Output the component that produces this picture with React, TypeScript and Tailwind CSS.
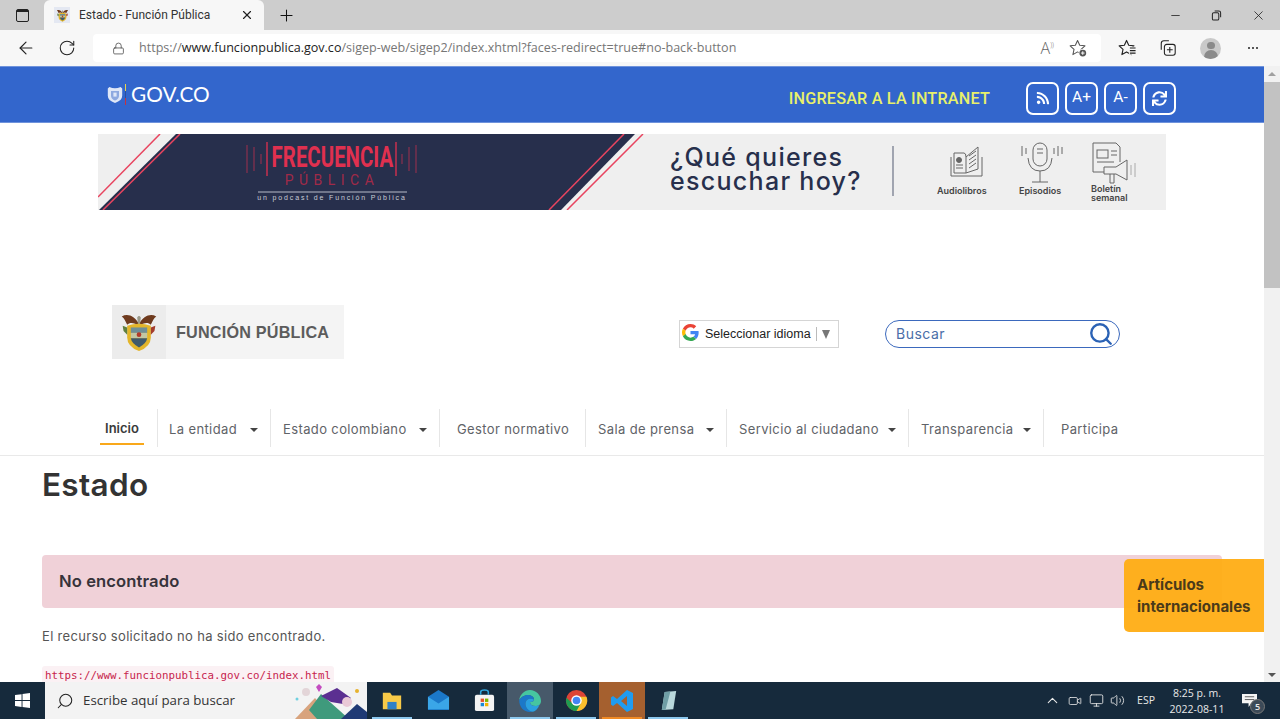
import type { ReactNode } from "react";
import { ArrowLeft, ChevronUp, Lock, Plus, RotateCw, Search, X, Minus, Volume2, Monitor, Video } from "lucide-react";
import { FaRss, FaSync } from "react-icons/fa";

const navItems = [
    { label: "La entidad", box: "w-[113px] pl-[11px]", caret: true },
    { label: "Estado colombiano", box: "w-[169px] pl-[12px]", caret: true },
    { label: "Gestor normativo", box: "w-[146px] pl-[17px]", caret: false },
    { label: "Sala de prensa", box: "w-[141px] pl-[12px]", caret: true },
    { label: "Servicio al ciudadano", box: "w-[182px] pl-[12px]", caret: true },
    { label: "Transparencia", box: "w-[135px] pl-[12px]", caret: true },
];

const STAR = "M9 1.5 L11.3 6.6 L16.8 7.2 L12.7 10.9 L13.9 16.4 L9 13.6 L4.1 16.4 L5.3 10.9 L1.2 7.2 L6.7 6.6Z";

function Shield({ className }: { className?: string }) {
    return (
        <svg viewBox="0 0 40 44" className={className}>
            <path d="M20 13 C15 5 8 1 1 5 C4 7 5 10 7 14 C10 11 15 12 20 15 C25 12 30 11 33 14 C35 10 36 7 39 5 C32 1 25 5 20 13Z" fill="#6e3a1e" />
            <path d="M18 6 Q20 3 22 6 L21 14 H19Z" fill="#9a9a8a" />
            <path d="M7 15 Q20 11 33 15 V28 Q33 38 20 43 Q7 38 7 28Z" fill="#e3b52a" />
            <path d="M11 17 H29 V23 H11Z" fill="#6f8f97" />
            <path d="M11 23 H29 V29 H11Z" fill="#c3c6a2" />
            <path d="M11 29 H29 Q28 35 20 39 Q12 35 11 29Z" fill="#3f5a6b" />
            <circle cx="20" cy="25" r="2.6" fill="#b23a2a" />
            <path d="M2 15 L7 17 V25 L3 21Z" fill="#5f7f3f" />
            <path d="M38 15 L33 17 V25 L37 21Z" fill="#a33c2c" />
        </svg>
    );
}

function GoogleG() {
    return (
        <svg viewBox="0 0 48 48" className="h-[17px] w-[17px] -translate-y-[2px]">
            <path fill="#EA4335" d="M24 9.5c3.5 0 6.7 1.2 9.2 3.6l6.9-6.9C35.9 2.4 30.5 0 24 0 14.6 0 6.5 5.4 2.6 13.2l8 6.2C12.5 13.6 17.8 9.5 24 9.5z" />
            <path fill="#4285F4" d="M46.98 24.55c0-1.57-.15-3.09-.38-4.55H24v9.02h12.94c-.58 2.96-2.26 5.48-4.78 7.18l7.73 6c4.51-4.18 7.09-10.36 7.09-17.65z" />
            <path fill="#FBBC05" d="M10.53 28.59A14.5 14.5 0 0 1 9.5 24c0-1.6.28-3.14.76-4.59l-8-6.2A23.9 23.9 0 0 0 0 24c0 3.88.92 7.54 2.56 10.78l7.97-6.19z" />
            <path fill="#34A853" d="M24 48c6.48 0 11.93-2.13 15.89-5.81l-7.73-6c-2.15 1.45-4.92 2.3-8.16 2.3-6.26 0-11.57-4.22-13.47-9.91l-7.98 6.19C6.51 42.62 14.62 48 24 48z" />
        </svg>
    );
}

function StarAdd() {
    return (
        <svg viewBox="0 0 20 20" className="h-[19px] w-[19px]" fill="none" stroke="#555" strokeWidth="1.1" strokeLinejoin="round">
            <path d={STAR} />
            <circle cx="14.5" cy="14.8" r="4.4" fill="#fff" stroke="none" />
            <circle cx="14.5" cy="14.8" r="3.6" fill="#555" stroke="none" />
            <path d="M14.5 12.9 V16.7 M12.6 14.8 H16.4" stroke="#fff" strokeWidth="1" />
        </svg>
    );
}

function FavList() {
    return (
        <svg viewBox="0 0 20 20" className="h-[19px] w-[19px]" fill="none" stroke="#222" strokeWidth="1.2" strokeLinejoin="round">
            <path d={STAR} />
            <rect x="11.5" y="8" width="8" height="8.5" fill="#f7f7f7" stroke="none" />
            <path d="M12.5 9.5 H18.5 M12.5 12.2 H18.5 M12.5 14.9 H18.5" />
        </svg>
    );
}

function Collections() {
    return (
        <svg viewBox="0 0 20 20" className="h-[18px] w-[18px]" fill="none" stroke="#222" strokeWidth="1.2">
            <path d="M2.5 12 V5 Q2.5 2 5.5 2 H11" />
            <rect x="6" y="6" width="12" height="12" rx="2.5" fill="#f7f7f7" />
            <path d="M12 8.8 V15.2 M8.8 12 H15.2" />
        </svg>
    );
}

function BrowserBar() {
    return (
        <div className="shrink-0 font-['Open_Sans',sans-serif]">
            <div className="flex h-[30px] items-end bg-[#cdcdcd]">
                <div className="flex h-[30px] w-[44px] items-center justify-center">
                    <div className="flex h-[13px] w-[13px] items-start rounded-[2px] border-[1.5px] border-[#222]">
                        <div className="h-[2px] w-full bg-[#222]" />
                    </div>
                </div>
                <div className="flex h-[30px] w-[220px] items-center rounded-t-[6px] bg-[#f7f7f7] pl-[10px] pr-[10px]">
                    <div className="flex h-[16px] w-[16px] items-center justify-center bg-[#e4e8f2]">
                        <Shield className="h-[13px] w-[13px]" />
                    </div>
                    <span className="ml-[9px] flex-1 font-['Roboto',sans-serif] text-[12px] text-[#333]">Estado - Función Pública</span>
                    <X size={14} className="text-[#222]" />
                </div>
                <div className="flex h-[30px] w-[44px] items-center justify-center">
                    <Plus size={19} strokeWidth={1.3} className="text-[#111]" />
                </div>
                <div className="flex-1" />
                <div className="flex h-[30px] items-center gap-[29px] pr-[14px] text-[#222]">
                    <Minus size={13} strokeWidth={1.5} />
                    <svg viewBox="0 0 12 12" className="h-[11px] w-[11px]" fill="none" stroke="#222" strokeWidth="1.1">
                        <rect x="1.5" y="3" width="7" height="8" rx="1.5" />
                        <path d="M4 1 H8.5 Q10.5 1 10.5 3 V8" />
                    </svg>
                    <X size={15} strokeWidth={1.3} />
                </div>
            </div>
            <div className="flex h-[36px] items-center bg-[#f7f7f7]">
                <div className="flex w-[93px] items-center pl-[16px] text-[#222]">
                    <ArrowLeft size={20} strokeWidth={1.4} />
                    <RotateCw size={18} strokeWidth={1.4} className="ml-[22px]" />
                </div>
                <div className="flex h-[28px] w-[1008px] items-center rounded-[4px] bg-white pl-[19px] pr-[13px]">
                    <Lock size={13} strokeWidth={1.4} className="text-[#444]" />
                    <div className="ml-[14px] flex-1 text-[12.55px] text-[#767676]">
                        https://<span className="text-[#222]">www.funcionpublica.gov.co</span>/sigep-web/sigep2/index.xhtml?faces-redirect=true#no-back-button
                    </div>
                    <span className="mr-[15px] flex items-start text-[16px] font-light leading-[16px] text-[#666]">
                        A<span className="text-[7px] leading-[10px]">))</span>
                    </span>
                    <StarAdd />
                </div>
                <div className="flex flex-1 items-center pl-[17px] text-[#222]">
                    <FavList />
                    <div className="ml-[22px]"><Collections /></div>
                    <div className="ml-[23px] flex h-[21px] w-[21px] flex-col items-center overflow-hidden rounded-full bg-[#c9c9c9]">
                        <div className="mt-[4px] h-[8px] w-[8px] rounded-full bg-[#8a8a8a]" />
                        <div className="mt-[1px] h-[9px] w-[14px] rounded-t-full bg-[#8a8a8a]" />
                    </div>
                    <div className="ml-[27px] flex gap-[2px]">
                        <div className="h-[2px] w-[2px] rounded-full bg-[#222]" />
                        <div className="h-[2px] w-[2px] rounded-full bg-[#222]" />
                        <div className="h-[2px] w-[2px] rounded-full bg-[#222]" />
                    </div>
                </div>
            </div>
        </div>
    );
}

function SiteHeader() {
    return (
        <div className="flex h-[57px] shrink-0 items-center border-y border-[#6f93dc] bg-[#3366cc] pl-[107px] pr-[88px]">
            <div className="flex items-center">
                <svg viewBox="0 0 20 22" className="h-[20px] w-[16px]">
                    <path d="M3 1 Q10 4 17 1 L19 3 V12 Q19 18 10 21 Q1 18 1 12 V3Z" fill="#dfe7f7" />
                    <path d="M5 6 H15 V12 Q15 16 10 18 Q5 16 5 12Z" fill="#8ea9e0" />
                    <path d="M8 8 H12 V13 H8Z" fill="#dfe7f7" />
                </svg>
                <div className="ml-[2px] flex h-[21px] w-[1px] flex-col">
                    <div className="flex-1 bg-[#e8d44d]" />
                    <div className="flex-1 bg-[#2a4fa0]" />
                    <div className="flex-1 bg-[#c8323c]" />
                </div>
                <span className="ml-[5px] font-['Lato',sans-serif] text-[20.8px] leading-none text-white">GOV.CO</span>
            </div>
            <div className="flex-1" />
            <span className="mr-[36px] mt-[9px] font-['Roboto',sans-serif] text-[16.2px] font-medium tracking-[0.2px] text-[#e7f06a]">INGRESAR A LA INTRANET</span>
            <div className="mt-[7px] flex gap-[6px] font-['Roboto',sans-serif] text-[15.5px] text-white">
                <div className="flex h-[33px] w-[33px] items-center justify-center rounded-[7px] border-2 border-white"><FaRss size={14} /></div>
                <div className="flex h-[33px] w-[33px] items-center justify-center rounded-[7px] border-2 border-white">A+</div>
                <div className="flex h-[33px] w-[33px] items-center justify-center rounded-[7px] border-2 border-white">A-</div>
                <div className="flex h-[33px] w-[33px] items-center justify-center rounded-[7px] border-2 border-white"><FaSync size={15} /></div>
            </div>
        </div>
    );
}

function Banner() {
    return (
        <div className="relative ml-[98px] mt-[11px] h-[76px] w-[1068px] shrink-0 overflow-hidden bg-[#efefef]">
            <svg viewBox="0 0 1068 76" className="absolute inset-0 h-full w-full">
                <polygon points="1,76 78,0 537,0 463,76" fill="#272f4c" />
                <line x1="0" y1="63" x2="62" y2="0" stroke="#e8445f" strokeWidth="1.5" />
                <line x1="5" y1="76" x2="82" y2="0" stroke="#e8445f" strokeWidth="1.5" />
                <line x1="451" y1="76" x2="526" y2="0" stroke="#e8445f" strokeWidth="1.5" />
                <line x1="469" y1="76" x2="545" y2="0" stroke="#e8445f" strokeWidth="1.5" />
                <g stroke="#e0304f" strokeWidth="1.3">
                    <line x1="169" y1="8" x2="169" y2="42" />
                    <line x1="298" y1="8" x2="298" y2="42" />
                    <g opacity="0.5">
                        <line x1="149" y1="11" x2="149" y2="39" />
                        <line x1="156" y1="13" x2="156" y2="37" />
                        <line x1="163" y1="20" x2="163" y2="30" />
                        <line x1="304" y1="20" x2="304" y2="30" />
                        <line x1="311" y1="13" x2="311" y2="37" />
                        <line x1="318" y1="11" x2="318" y2="39" />
                    </g>
                </g>
                <line x1="160" y1="58" x2="309" y2="58" stroke="#b8bcc8" strokeWidth="1" />
                <line x1="795" y1="12" x2="795" y2="62" stroke="#6c7285" strokeWidth="1.2" />
                {/* audiolibros */}
                <g fill="none" stroke="#666" strokeWidth="1">
                    <path d="M856 19 H866 Q868 19 868 23 V39 H856Z" />
                    <path d="M868 23 L880 13 V35 L868 39" />
                    <path d="M853 23 V42 H884 V23" />
                    <path d="M871 22 L878 17 M871 26 L878 21 M871 30 L878 25 M871 34 L878 29" />
                    <path d="M858 34 H865 M858 31 H865" />
                    <circle cx="861" cy="26" r="2.5" fill="#666" />
                </g>
                {/* episodios */}
                <g fill="none" stroke="#666" strokeWidth="1">
                    <rect x="935" y="9" width="14" height="23" rx="7" />
                    <path d="M930 24 Q931 37 942 37 Q953 37 954 24" />
                    <path d="M942 37 V48 M934 48 H950" />
                    <path d="M924 12 V22 M928 14 V20 M956 14 V20 M960 12 V22 M964 13 V20" />
                    <path d="M939 15 H945 M939 19 H945" />
                </g>
                {/* boletin */}
                <g fill="none" stroke="#666" strokeWidth="1">
                    <path d="M995 9 H1018 L1022 13 V28 M995 9 V38 H1006" />
                    <rect x="999" y="16" width="11" height="8" />
                    <path d="M1013 17 H1019 M1013 21 H1019 M999 28 H1016" />
                    <path d="M1006 33 H1018 L1029 26 V46 L1018 40 H1006Z" />
                    <path d="M1012 40 V49 H1016 V40" />
                    <path d="M1033 31 V41 M1037 29 V43" stroke="#aaa" />
                </g>
            </svg>
            <div className="relative flex h-full font-['Inter',sans-serif]">
                <div className="ml-[148px] flex w-[172px] flex-col items-center">
                    <span className="mt-[7px] font-['Roboto',sans-serif] text-[30px] font-bold leading-[32px] text-[#e0304f] [transform:scaleX(0.68)]">FRECUENCIA</span>
                    <span className="font-['Roboto',sans-serif] text-[14px] leading-[15px] tracking-[5.5px] text-[#a02a48]">PÚBLICA</span>
                    <span className="mt-[5px] whitespace-nowrap font-['Liberation_Sans',sans-serif] text-[7px] leading-[9px] tracking-[1.85px] text-[#c8ccd6]">un podcast de Función Pública</span>
                </div>
                <div className="ml-[252px] mt-[11px] font-['Inter',sans-serif] text-[25px] font-medium leading-[24px] tracking-[1.3px] text-[#272f4c]">
                    <div>¿Qué quieres</div>
                    <div>escuchar hoy?</div>
                </div>
                <div className="absolute left-[839px] top-[50px] text-[9px] font-semibold text-[#444]">Audiolibros</div>
                <div className="absolute left-[921px] top-[50px] text-[9px] font-semibold text-[#444]">Episodios</div>
                <div className="absolute left-[993px] top-[50px] text-[9px] font-semibold leading-[9px] text-[#444]">Boletín<br />semanal</div>
            </div>
        </div>
    );
}

function LogoRow() {
    return (
        <div className="ml-[112px] mt-[95px] flex h-[54px] shrink-0 items-center">
            <div className="flex h-[54px] w-[232px] items-center bg-[#f4f4f4]">
                <div className="flex h-full w-[54px] items-center justify-center bg-[#ececec]">
                    <Shield className="h-[40px] w-[38px]" />
                </div>
                <span className="ml-[10px] font-['Liberation_Sans',sans-serif] text-[16.2px] font-bold tracking-[0.2px] text-[#5c5c5c]">FUNCIÓN PÚBLICA</span>
            </div>
            <div className="ml-[335px] mt-[4px] flex h-[28px] w-[160px] items-center border border-[#d5d5d5] bg-white pl-[2px]">
                <GoogleG />
                <span className="ml-[6px] font-['Liberation_Sans',sans-serif] text-[12.5px] text-[#222]">Seleccionar idioma</span>
                <div className="mx-[5px] h-[14px] w-px bg-[#bbb]" />
                <div className="h-0 w-0 border-x-[4px] border-t-[9px] border-x-transparent border-t-[#777]" />
            </div>
            <div className="ml-[46px] mt-[3px] flex h-[28px] w-[235px] items-center rounded-full border border-[#3b69bd] bg-white pl-[10px] pr-[5px]">
                <span className="flex-1 font-['Inter',sans-serif] text-[14px] tracking-[0.5px] text-[#4a6ea8]">Buscar</span>
                <Search size={26} strokeWidth={2.2} className="text-[#2b62b5]" />
            </div>
        </div>
    );
}

function NavBar() {
    return (
        <div className="mt-[50px] flex h-[47px] shrink-0 border-b border-[#e9e9e9] pl-[100px] font-['Inter',sans-serif] text-[13px] tracking-[0.38px] text-[#5f6368]">
            <div className="mb-[9px] flex h-[38px] w-[58px] items-start border-r border-[#e6e6e6]">
                <div className="flex h-[36px] w-[44px] items-center justify-center border-b-2 border-[#f9a81a] pt-[6px] text-[13px] font-semibold tracking-normal text-[#3a3a3a]">Inicio</div>
            </div>
            {navItems.map((item) => (
                <div key={item.label} className={`${item.box} mb-[9px] flex h-[38px] items-center justify-between border-r border-[#e6e6e6] pr-[12px] pt-[3px]`}>
                    <span>{item.label}</span>
                    {item.caret && <div className="h-0 w-0 border-x-[4px] border-t-[4px] border-x-transparent border-t-[#444]" />}
                </div>
            ))}
            <div className="mb-[9px] flex h-[38px] items-center pl-[17px] pt-[3px]">Participa</div>
        </div>
    );
}

function TaskIcon({ children, active, highlight, bar }: { children: ReactNode; active?: boolean; highlight?: string; bar?: string }) {
    return (
        <div className={`relative flex w-[46px] items-center justify-center ${highlight ?? ""}`}>
            {children}
            {active && <div className={`absolute bottom-0 left-[3px] right-[3px] h-[2px] ${bar ?? "bg-[#8cc8ee]"}`} />}
        </div>
    );
}

function Taskbar() {
    return (
        <div className="flex h-[37px] shrink-0 bg-[#162a3c] font-['Open_Sans',sans-serif]">
            <div className="flex w-[45px] items-center justify-center">
                <svg viewBox="0 0 16 16" className="h-[15px] w-[15px]" fill="#fff">
                    <path d="M0 2.2 L7 1.2 V7.5 H0Z M8 1 L16 0 V7.5 H8Z M0 8.5 H7 V14.8 L0 13.8Z M8 8.5 H16 V16 L8 15Z" />
                </svg>
            </div>
            <div className="relative mr-[2px] flex w-[322px] items-center overflow-hidden bg-[#f3f3f3] pl-[11px]">
                <Search size={18} strokeWidth={1.4} className="-scale-x-100 text-[#222]" />
                <span className="ml-[9px] text-[13.3px] text-[#333]">Escribe aquí para buscar</span>
                <svg viewBox="0 0 72 37" className="absolute right-0 top-0 h-[37px] w-[72px]">
                    <polygon points="0,37 20,16 38,37" fill="#d8a37d" />
                    <polygon points="14,28 26,12 54,37 22,37" fill="#3f9a7c" />
                    <polygon points="26,14 42,6 56,16 48,22 36,20" fill="#5b2f91" />
                    <polygon points="46,37 62,22 72,30 72,37" fill="#1f3a75" />
                    <circle cx="52" cy="20" r="5" fill="#e9c9d6" />
                    <circle cx="11" cy="10" r="4" fill="#e3d5d8" />
                    <polygon points="24,2 27,5 24,10 21,5" fill="#c44bc0" />
                    <circle cx="62" cy="9" r="2" fill="#e7b32e" />
                    <circle cx="2" cy="17" r="1.5" fill="#6fd0e0" />
                </svg>
            </div>
            <TaskIcon active>
                <svg viewBox="0 0 24 24" className="h-[22px] w-[22px]">
                    <path d="M2 3 H10 L12 6 H22 V21 H2Z" fill="#f7c948" />
                    <rect x="7" y="13" width="10" height="8" fill="#2f80c8" />
                </svg>
            </TaskIcon>
            <TaskIcon>
                <svg viewBox="0 0 24 24" className="h-[23px] w-[23px]">
                    <path d="M1 8 L12 1 L23 8 V22 H1Z" fill="#1b78c9" />
                    <path d="M1 8 L12 15 L23 8 V21 H1Z" fill="#3aa6e8" />
                </svg>
            </TaskIcon>
            <TaskIcon>
                <svg viewBox="0 0 24 24" className="h-[23px] w-[23px]">
                    <rect x="2" y="6" width="20" height="17" rx="2" fill="#f4f4f4" />
                    <path d="M8 6 V3 Q8 1 12 1 Q16 1 16 3 V6" fill="none" stroke="#2fa4dc" strokeWidth="1.6" />
                    <rect x="8" y="10" width="3.5" height="3.5" fill="#e5532d" />
                    <rect x="12.5" y="10" width="3.5" height="3.5" fill="#7fb800" />
                    <rect x="8" y="14.5" width="3.5" height="3.5" fill="#1b8ad6" />
                    <rect x="12.5" y="14.5" width="3.5" height="3.5" fill="#f4b400" />
                </svg>
            </TaskIcon>
            <TaskIcon active highlight="bg-[#47596a]">
                <svg viewBox="0 0 24 24" className="h-[24px] w-[24px]">
                    <path d="M12 1 C18 1 23 6 23 12 C23 15 21 17 17.5 17 C14 17 12 15.5 12 13 C15 13 16 12 16 10.5 C16 7.5 13 6 10 6 C6 6 3 8.5 1.2 11 C2 5.5 6.5 1 12 1Z" fill="#46c6a0" />
                    <path d="M1.2 11 C3 8.5 6 6 10 6 C13 6 16 7.5 16 10.5 C12 8.5 7.5 10 7.5 15 C7.5 19 11 22.5 15 22.8 C13.8 23 12.9 23 12 23 C5.9 23 1 18 1.2 11Z" fill="#1b78c9" />
                    <path d="M12 13 C12 15.5 14 17 17.5 17 C19 17 20.5 16.5 21.5 15.8 C20 20 17.5 22 15 22.8 C11 22.5 7.5 19 7.5 15 C7.5 10 12 8.5 16 10.5 C16 12 15 13 12 13Z" fill="#2ba0e0" />
                </svg>
            </TaskIcon>
            <TaskIcon active>
                <svg viewBox="0 0 24 24" className="h-[23px] w-[23px]">
                    <circle cx="12" cy="12" r="11" fill="#dd4437" />
                    <path d="M3 17 A11 11 0 0 0 13 23 L17 15 L8 15Z" fill="#1f9c50" />
                    <path d="M1.5 9 A11 11 0 0 0 12 23 L8 15Z" fill="#1f9c50" />
                    <path d="M22.5 8 A11 11 0 0 1 12 23 L17 14 L15 8Z" fill="#fbc02d" />
                    <circle cx="12" cy="12" r="5.5" fill="#fff" />
                    <circle cx="12" cy="12" r="4" fill="#4285f4" />
                </svg>
            </TaskIcon>
            <TaskIcon active highlight="bg-[#a5602f]" bar="bg-[#f08a24]">
                <svg viewBox="0 0 24 24" className="h-[24px] w-[24px]">
                    <path d="M17 1 L23 4 V20 L17 23 L7 14 L3 17 L1 15.5 V8.5 L3 7 L7 10Z M17 7 L11 12 L17 17Z" fill="#1f9cf0" />
                </svg>
            </TaskIcon>
            <TaskIcon active>
                <svg viewBox="0 0 24 24" className="h-[23px] w-[23px]">
                    <path d="M8 3 L20 2 L17 21 L5 22Z" fill="#b9d8dc" />
                    <path d="M8 3 L14 2.5 L9 21.5 L5 22Z" fill="#6f9ea6" />
                </svg>
            </TaskIcon>
            <div className="flex-1" />
            <div className="flex items-center pr-[23px] text-[#e8e8e8]">
                <ChevronUp size={17} strokeWidth={1.5} />
                <Video size={14} strokeWidth={1.4} className="ml-[7px]" />
                <Monitor size={15} strokeWidth={1.4} className="ml-[7px]" />
                <Volume2 size={15} strokeWidth={1.4} className="ml-[6px]" />
                <span className="ml-[12px] text-[10.5px] font-medium">ESP</span>
                <div className="ml-[14px] flex w-[56px] flex-col items-center text-[10.5px] font-medium leading-[16px]">
                    <span>8:25 p. m.</span>
                    <span>2022-08-11</span>
                </div>
                <div className="relative ml-[17px]">
                    <svg viewBox="0 0 16 16" className="h-[15px] w-[15px]">
                        <path d="M0 1 H16 V11 H10 L7 15 V11 H0Z" fill="#f4f4f4" />
                        <path d="M3 4 H13 M3 7 H13" stroke="#555" strokeWidth="1" />
                    </svg>
                    <div className="absolute -bottom-[6px] -right-[8px] flex h-[15px] w-[15px] items-center justify-center rounded-full border border-[#777] bg-[#3c4a58] text-[9px] font-semibold">5</div>
                </div>
            </div>
        </div>
    );
}

export default function App() {
    return (
        <div className="flex h-[719px] w-[1280px] flex-col overflow-hidden bg-white">
            <BrowserBar />
            <div className="relative flex min-h-0 flex-1">
                <div className="flex min-w-0 flex-1 flex-col overflow-hidden">
                    <SiteHeader />
                    <Banner />
                    <LogoRow />
                    <NavBar />
                    <div className="shrink-0 pl-[42px] pr-[42px] font-['Inter',sans-serif]">
                        <h1 className="mt-[9px] text-[31.5px] font-semibold leading-[40px] tracking-[0.3px] text-[#333]">Estado</h1>
                        <div className="mt-[50px] flex h-[53px] w-[1180px] items-center rounded-[4px] bg-[#f0d1d8] pl-[17px] text-[16.6px] font-semibold tracking-[0.1px] text-[#37333a]">No encontrado</div>
                        <p className="mt-[18px] text-[13px] leading-[20px] tracking-[0.33px] text-[#555]">El recurso solicitado no ha sido encontrado.</p>
                        <code className="mt-[20px] inline-block rounded-[3px] bg-[#fbf1f4] px-[3px] font-['DejaVu_Sans_Mono',monospace] text-[10.8px] leading-[20px] text-[#c7254e]">https://www.funcionpublica.gov.co/index.html</code>
                    </div>
                </div>
                <div className="flex w-[16px] shrink-0 flex-col items-center bg-[#f1f1f1]">
                    <div className="mt-[6px] h-0 w-0 border-x-[4px] border-b-[4px] border-x-transparent border-b-[#a0a0a0]" />
                    <div className="mt-[6px] h-[206px] w-full bg-[#c2c2c2]" />
                    <div className="flex-1" />
                    <div className="mb-[5px] h-0 w-0 border-x-[4px] border-t-[4px] border-x-transparent border-t-[#555]" />
                </div>
                {/* tab that floats over the page */}
                <div className="absolute left-[1124px] top-[493px] flex h-[73px] w-[140px] flex-col justify-center rounded-l-[5px] bg-[#ffad14]/95 pl-[13px] font-['Inter',sans-serif] text-[15px] font-bold leading-[22px] text-[#4a3a1a]">
                    <span>Artículos</span>
                    <span>internacionales</span>
                </div>
            </div>
            <Taskbar />
        </div>
    );
}
